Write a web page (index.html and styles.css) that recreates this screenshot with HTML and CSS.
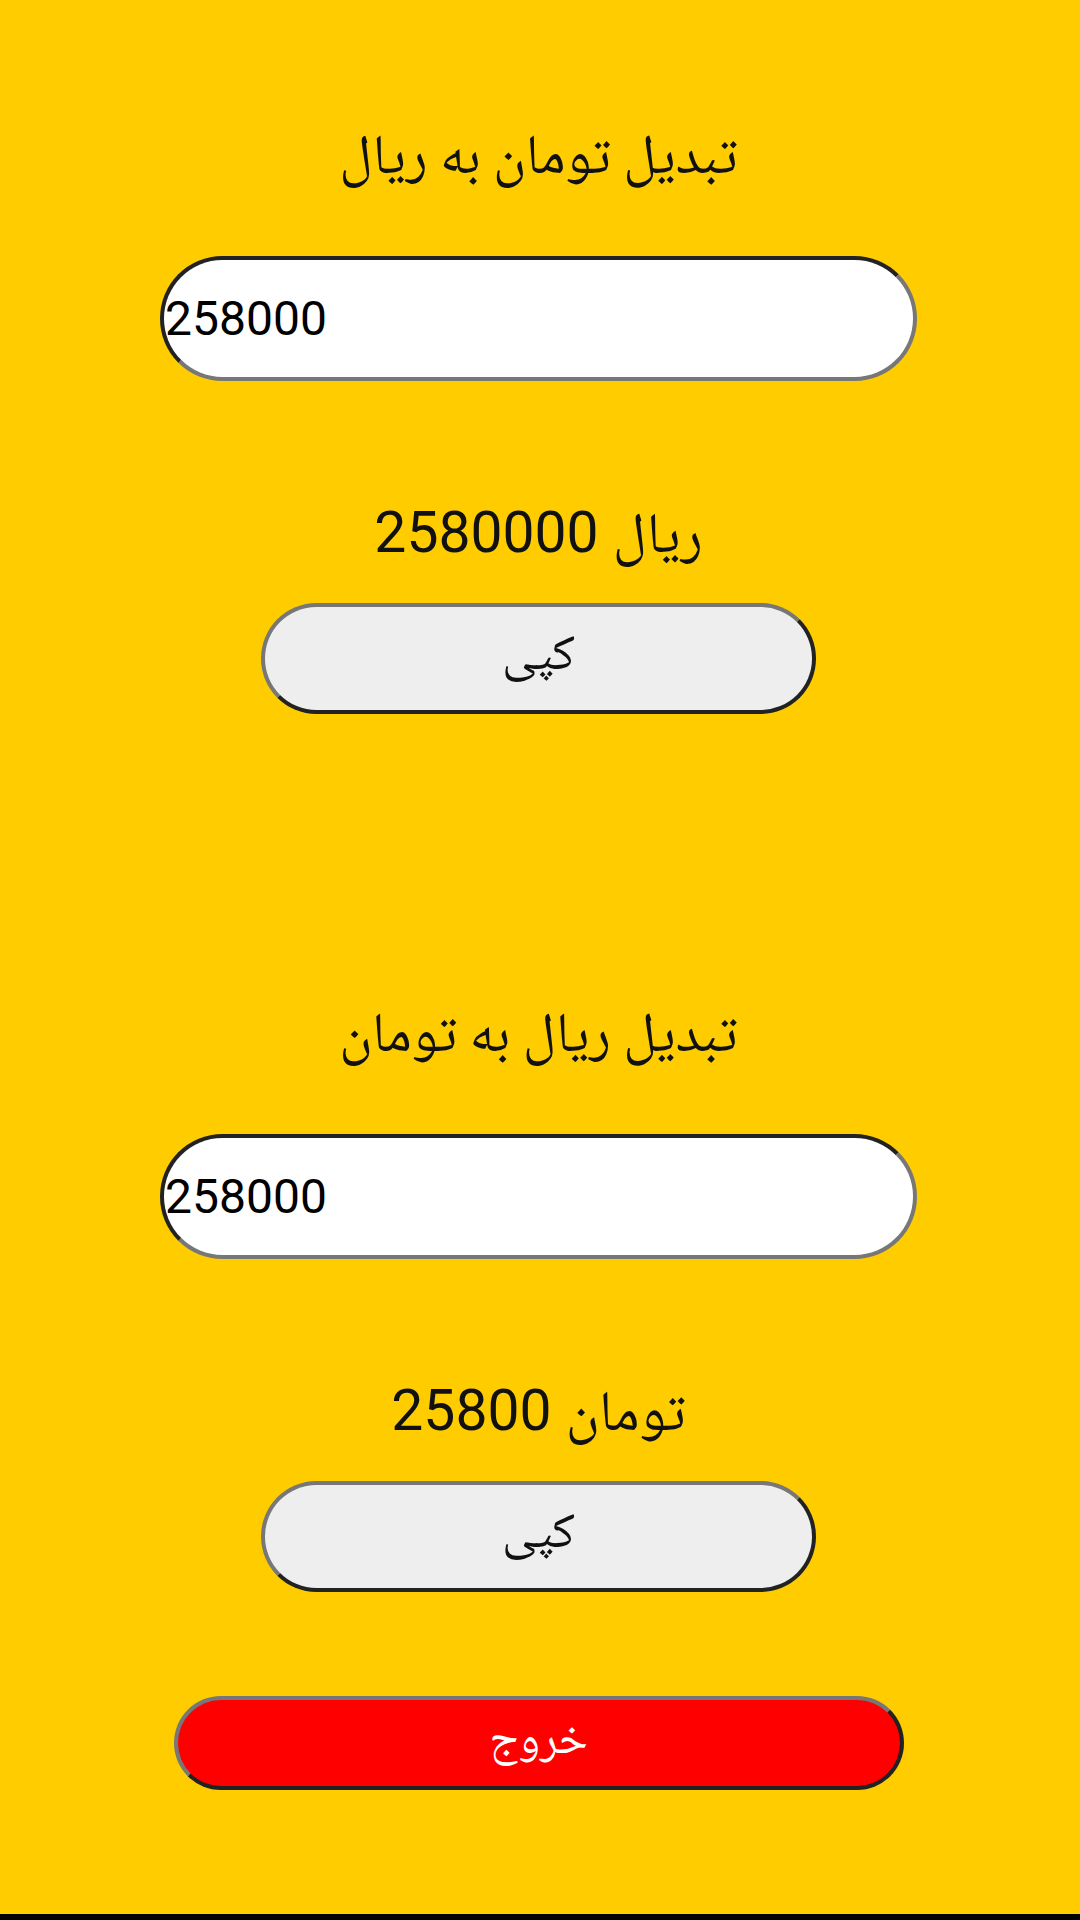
FILE: index.html
```html
<!DOCTYPE html>
<html lang="fa" dir="rtl">
<head>
    <meta charset="UTF-8">
    <meta name="viewport" content="width=device-width, initial-scale=1.0">
    <title>تبدیل تومان و ریال</title>
    <link rel="stylesheet" href="styles.css">
</head>
<body>
    <div class="pantalla">
        <div class="convertidor primero">
            <h1 class="titulo">تبدیل تومان به ریال</h1>
            <input class="entrada" type="text" dir="ltr" value="258000">
            <p class="resultado">ریال 2580000</p>
            <button class="copiar">کپی</button>
        </div>

        <div class="convertidor segundo">
            <h1 class="titulo">تبدیل ریال به تومان</h1>
            <input class="entrada" type="text" dir="ltr" value="258000">
            <p class="resultado">تومان 25800</p>
            <button class="copiar">کپی</button>
        </div>

        <button class="salir">خروج</button>
    </div>
    <div class="barra"></div>
</body>
</html>
```

FILE: styles.css
```css
html, body {
    margin: 0;
    padding: 0;
}

body {
    width: 1080px;
    height: 1920px;
    display: flex;
    flex-direction: column;
    background-color: #ffcc00;
    font-family: "Noto Naskh Arabic", "Noto Sans Arabic", "DejaVu Sans", sans-serif;
    color: #111;
}

.pantalla {
    flex: 1;
    display: flex;
    flex-direction: column;
    align-items: center;
    padding-right: 3px;
}

.convertidor {
    display: flex;
    flex-direction: column;
    align-items: center;
}

.primero {
    padding-top: 126px;
}

.segundo {
    padding-top: 290px;
}

.titulo {
    margin: 0;
    height: 70px;
    line-height: 70px;
    font-size: 56px;
    font-weight: normal;
    color: #111;
}

.entrada {
    box-sizing: border-box;
    width: 757px;
    height: 125px;
    margin-top: 60px;
    padding: 0 0 0 1px;
    border: 4px solid;
    border-color: #222 #777 #777 #222;
    border-radius: 63px;
    background-color: white;
    font-family: Roboto, "Liberation Sans", sans-serif;
    font-size: 48px;
    color: #000;
    text-align: left;
    outline: none;
}

.resultado {
    margin: 117px 0 0 0;
    height: 70px;
    line-height: 70px;
    font-family: Roboto, "Noto Naskh Arabic", "Noto Sans Arabic", "DejaVu Sans", sans-serif;
    font-size: 57px;
    color: #111;
}

.copiar {
    box-sizing: border-box;
    width: 555px;
    height: 111px;
    margin-top: 35px;
    border: 4px solid;
    border-color: #777 #222 #222 #777;
    border-radius: 56px;
    background-color: #eeeeee;
    font-family: "Noto Naskh Arabic", "Noto Sans Arabic", "DejaVu Sans", sans-serif;
    font-size: 50px;
    color: #111;
    cursor: pointer;
}

.salir {
    box-sizing: border-box;
    width: 730px;
    height: 94px;
    margin-top: 104px;
    border: 4px solid;
    border-color: #777 #222 #222 #777;
    border-radius: 47px;
    background-color: #ff0000;
    font-family: "Noto Naskh Arabic", "Noto Sans Arabic", "DejaVu Sans", sans-serif;
    font-size: 46px;
    color: white;
    cursor: pointer;
}

.barra {
    height: 6px;
    background-color: #000;
}
```
